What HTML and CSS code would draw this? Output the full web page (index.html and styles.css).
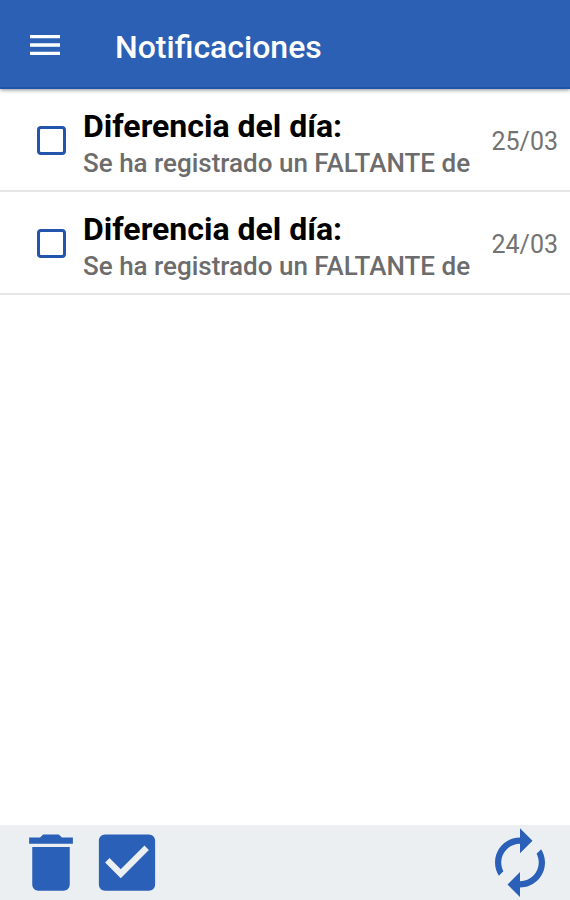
FILE: index.html
```html
<!DOCTYPE html>
<html lang="es">
<head>
<meta charset="utf-8">
<meta name="viewport" content="width=device-width, initial-scale=1">
<title>Notificaciones</title>
<link rel="stylesheet" href="styles.css">
</head>
<body>
<header class="app-bar">
  <button class="icon-button menu-button" type="button" aria-label="Menú">
    <svg viewBox="0 0 24 24"><path d="M3 18h18v-2H3v2zm0-5h18v-2H3v2zm0-7v2h18V6H3z"/></svg>
  </button>
  <h1 class="app-title">Notificaciones</h1>
</header>
<main class="content">
  <ul class="list">
    <li class="item">
      <input class="check" type="checkbox" id="n1">
      <label class="text" for="n1">
        <span class="subject">Diferencia del día:</span>
        <span class="preview">Se ha registrado un FALTANTE de</span>
      </label>
      <time class="date">25/03</time>
    </li>
    <li class="item">
      <input class="check" type="checkbox" id="n2">
      <label class="text" for="n2">
        <span class="subject">Diferencia del día:</span>
        <span class="preview">Se ha registrado un FALTANTE de</span>
      </label>
      <time class="date">24/03</time>
    </li>
  </ul>
</main>
<footer class="toolbar">
  <button class="icon-button" type="button" aria-label="Eliminar">
    <svg viewBox="0 0 24 24"><path d="M6 19c0 1.1.9 2 2 2h8c1.1 0 2-.9 2-2V7H6v12zM19 4h-3.5l-1-1h-5l-1 1H5v2h14V4z"/></svg>
  </button>
  <button class="icon-button" type="button" aria-label="Seleccionar todo">
    <svg viewBox="0 0 24 24"><path d="M19 3H5c-1.110 0-2 .9-2 2v14c0 1.100.890 2 2 2h14c1.110 0 2-.9 2-2V5c0-1.100-.890-2-2-2zm-9 14l-5-5 1.410-1.410L10 14.170l7.590-7.590L19 8l-9 9z"/></svg>
  </button>
  <button class="icon-button refresh-button" type="button" aria-label="Actualizar">
    <svg viewBox="0 0 24 24"><path d="M12 6v3l4-4-4-4v3c-4.420 0-8 3.580-8 8 0 1.570.460 3.030 1.240 4.260L6.700 14.800c-.450-.830-.700-1.790-.700-2.800 0-3.310 2.690-6 6-6zm6.760 1.740L17.300 9.200c.440.840.700 1.790.700 2.800 0 3.310-2.690 6-6 6v-3l-4 4 4 4v-3c4.420 0 8-3.580 8-8 0-1.570-.460-3.030-1.240-4.260z"/></svg>
  </button>
</footer>
</body>
</html>
```

FILE: styles.css
```css
* {
  box-sizing: border-box;
}

body {
  margin: 0;
  min-height: 100vh;
  display: flex;
  flex-direction: column;
  background: #fff;
  font-family: Roboto, "Liberation Sans", sans-serif;
}

.app-bar {
  display: flex;
  align-items: center;
  gap: 50px;
  padding: 25px 25px 22px;
  background: #2c60b4;
  color: #fff;
  border-bottom: 2px solid #1d56ac;
  box-shadow: 0 1px 4px rgba(0, 0, 0, 0.45);
}

.icon-button {
  display: block;
  padding: 0;
  border: 0;
  background: none;
  color: #2a60b8;
  cursor: pointer;
}

.icon-button svg {
  display: block;
  width: 76px;
  height: 76px;
  fill: currentColor;
}

.menu-button {
  color: #fff;
}

.menu-button svg {
  width: 40px;
  height: 40px;
}

.app-title {
  margin: 0;
  padding-top: 4px;
  font-size: 32px;
  line-height: 36px;
  font-weight: 500;
}

.content {
  flex: 1;
}

.list {
  margin: 0;
  padding: 0;
  list-style: none;
}

.item {
  display: flex;
  align-items: center;
  padding: 17px 12px 9px 37px;
  border-bottom: 2px solid #e6e6e6;
}

.check {
  appearance: none;
  flex: none;
  width: 29px;
  height: 29px;
  margin: 0 17px 6px 0;
  border: 3px solid #2455ae;
  border-radius: 4px;
  background: #fff;
}

.check:checked {
  background: #2455ae;
}

.text {
  flex: 1;
  min-width: 0;
  display: flex;
  flex-direction: column;
}

.subject {
  font-size: 32px;
  line-height: 40px;
  font-weight: 700;
  color: #000;
}

.preview {
  font-size: 26px;
  line-height: 35px;
  font-weight: 500;
  color: #6c6c6c;
  white-space: nowrap;
}

.date {
  padding-bottom: 4px;
  font-size: 25px;
  line-height: 32px;
  color: #737373;
}

.toolbar {
  display: flex;
  padding: 0 12px 0 13px;
  background: #ebeff2;
}

.toolbar .icon-button svg {
  height: 75px;
}

.refresh-button {
  margin-left: auto;
}
```
